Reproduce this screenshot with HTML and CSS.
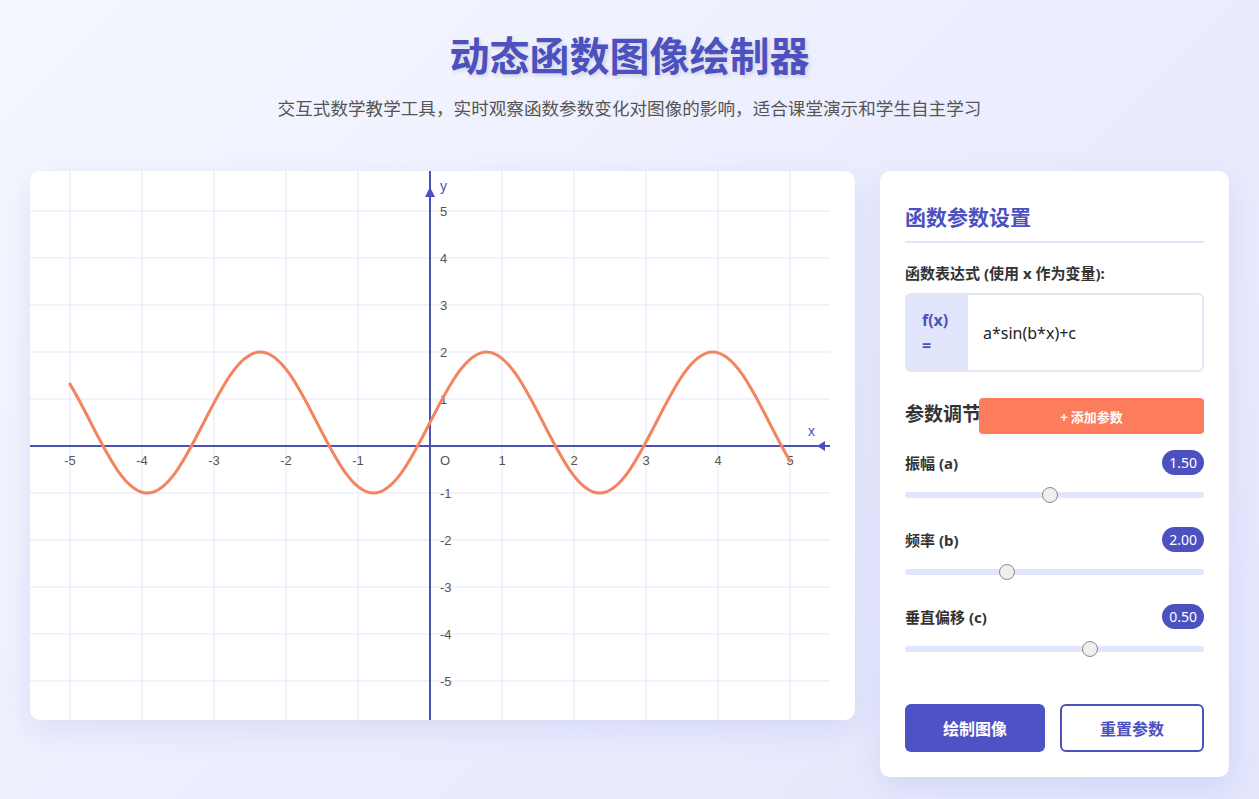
FILE: index.html
```html
<!DOCTYPE html>
<html lang="zh-CN">
<head>
<meta charset="UTF-8">
<title>动态函数图像绘制器</title>
<link rel="stylesheet" href="styles.css">
</head>
<body>
<div class="app">
  <header class="header">
    <h1 class="title">动态函数图像绘制器</h1>
    <p class="subtitle">交互式数学教学工具，实时观察函数参数变化对图像的影响，适合课堂演示和学生自主学习</p>
  </header>
  <main class="layout">
    <section class="graph-card">
      <svg class="graph" viewBox="0 0 800 550" width="800" height="550" xmlns="http://www.w3.org/2000/svg">
        <g class="grid">
          <line x1="40" y1="0" x2="40" y2="550"/>
          <line x1="112" y1="0" x2="112" y2="550"/>
          <line x1="184" y1="0" x2="184" y2="550"/>
          <line x1="256" y1="0" x2="256" y2="550"/>
          <line x1="328" y1="0" x2="328" y2="550"/>
          <line x1="472" y1="0" x2="472" y2="550"/>
          <line x1="544" y1="0" x2="544" y2="550"/>
          <line x1="616" y1="0" x2="616" y2="550"/>
          <line x1="688" y1="0" x2="688" y2="550"/>
          <line x1="760" y1="0" x2="760" y2="550"/>
          <line x1="0" y1="40" x2="800" y2="40"/>
          <line x1="0" y1="87" x2="800" y2="87"/>
          <line x1="0" y1="134" x2="800" y2="134"/>
          <line x1="0" y1="181" x2="800" y2="181"/>
          <line x1="0" y1="228" x2="800" y2="228"/>
          <line x1="0" y1="322" x2="800" y2="322"/>
          <line x1="0" y1="369" x2="800" y2="369"/>
          <line x1="0" y1="416" x2="800" y2="416"/>
          <line x1="0" y1="463" x2="800" y2="463"/>
          <line x1="0" y1="510" x2="800" y2="510"/>
        </g>
        <g class="axes">
          <line x1="0" y1="275" x2="800" y2="275"/>
          <line x1="400" y1="0" x2="400" y2="550"/>
          <polygon class="arrow" points="787,275 795,270 795,280"/>
          <polygon class="arrow" points="400,16 395,26 405,26"/>
        </g>
        <g class="ticks-x" transform="translate(0,1)">
          <text x="40" y="290">-5</text>
          <text x="112" y="290">-4</text>
          <text x="184" y="290">-3</text>
          <text x="256" y="290">-2</text>
          <text x="328" y="290">-1</text>
          <text x="415" y="290">O</text>
          <text x="472" y="290">1</text>
          <text x="544" y="290">2</text>
          <text x="616" y="290">3</text>
          <text x="688" y="290">4</text>
          <text x="760" y="290">5</text>
        </g>
        <g class="ticks-y" transform="translate(0,1.5)">
          <text x="410" y="40">5</text>
          <text x="410" y="87">4</text>
          <text x="410" y="134">3</text>
          <text x="410" y="181">2</text>
          <text x="410" y="228">1</text>
          <text x="410" y="322">-1</text>
          <text x="410" y="369">-2</text>
          <text x="410" y="416">-3</text>
          <text x="410" y="463">-4</text>
          <text x="410" y="510">-5</text>
        </g>
        <text class="axis-name" x="410" y="16">y</text>
        <text class="axis-name" x="778" y="261">x</text>
        <path class="curve" d="M40 213.15 C46.90 224.49, 53.81 237.99, 60.71 251.5
          C79.15 287.62, 96.79 322, 117.26 322
          C137.73 322, 155.36 287.62, 173.80 251.5
          C192.24 215.38, 209.88 181, 230.35 181
          C250.82 181, 268.46 215.38, 286.90 251.5
          C305.34 287.62, 322.98 322, 343.45 322
          C363.92 322, 381.56 287.62, 400 251.5
          C418.44 215.38, 436.08 181, 456.55 181
          C477.02 181, 494.66 215.38, 513.10 251.5
          C531.54 287.62, 549.18 322, 569.65 322
          C590.12 322, 607.76 287.62, 626.20 251.5
          C644.64 215.38, 662.28 181, 682.75 181
          C703.22 181, 720.85 215.38, 739.29 251.5
          C746.19 265.01, 753.10 278.51, 760 289.85"/>
      </svg>
    </section>

    <aside class="panel">
      <h2 class="panel-title">函数参数设置</h2>
      <label class="field-label" for="expr">函数表达式 (使用 x 作为变量):</label>
      <div class="expr-group">
        <span class="expr-prefix">f(x) =</span>
        <input class="expr-input" id="expr" type="text" value="a*sin(b*x)+c">
      </div>

      <div class="params-head">
        <h3 class="params-title">参数调节</h3>
        <button class="add-btn" type="button">+ 添加参数</button>
      </div>

      <div class="param">
        <div class="param-row">
          <span class="param-name">振幅 (a)</span>
          <span class="badge">1.50</span>
        </div>
        <input class="slider" type="range" min="0.1" max="3" step="0.01" value="1.5">
      </div>
      <div class="param">
        <div class="param-row">
          <span class="param-name">频率 (b)</span>
          <span class="badge">2.00</span>
        </div>
        <input class="slider" type="range" min="0.5" max="5" step="0.01" value="2">
      </div>
      <div class="param">
        <div class="param-row">
          <span class="param-name">垂直偏移 (c)</span>
          <span class="badge">0.50</span>
        </div>
        <input class="slider" type="range" min="-2" max="2" step="0.01" value="0.5">
      </div>

      <div class="actions">
        <button class="btn btn-primary" type="button">绘制图像</button>
        <button class="btn btn-outline" type="button">重置参数</button>
      </div>
    </aside>
  </main>
</div>
</body>
</html>
```

FILE: styles.css
```css
* {
  box-sizing: border-box;
}

html, body {
  margin: 0;
  padding: 0;
}

body {
  min-height: 100vh;
  font-family: "Noto Sans", "Noto Sans CJK SC", sans-serif;
  color: #333;
  background: linear-gradient(135deg, #f5f7ff 0%, #eceefe 50%, #e3e6fc 100%);
}

.app {
  padding: 30px;
}

.header {
  text-align: center;
  margin-bottom: 49px;
}

.title {
  margin: 0;
  font-family: "Noto Sans CJK SC", sans-serif;
  font-size: 40px;
  line-height: 48px;
  font-weight: 700;
  color: #4c51bf;
  text-shadow: 2px 2px 4px rgba(0, 0, 0, 0.12);
}

.subtitle {
  margin: 16px 0 0;
  font-family: "Noto Sans CJK SC", sans-serif;
  font-size: 17.6px;
  line-height: 28px;
  color: #555;
}

.layout {
  display: grid;
  grid-template-columns: 1fr 349px;
  gap: 25px;
  align-items: start;
}

.graph-card {
  background: #fff;
  border-radius: 10px;
  overflow: hidden;
  box-shadow: 0 10px 30px rgba(76, 81, 191, 0.12);
  height: 549px;
}

.graph {
  display: block;
}

.grid line {
  stroke: #eceefb;
  stroke-width: 1.5;
}

.axes line {
  stroke: #4c51b0;
  stroke-width: 2;
}

.arrow {
  fill: #4c51bf;
}

.ticks-x text,
.ticks-y text {
  font-family: "Liberation Sans", Arial, sans-serif;
  font-size: 13px;
  fill: #555;
  dominant-baseline: middle;
}

.ticks-x text {
  text-anchor: middle;
}

.ticks-y text {
  text-anchor: start;
}

.axis-name {
  font-family: "Liberation Sans", Arial, sans-serif;
  font-size: 14px;
  fill: #4c51bf;
  dominant-baseline: middle;
}

.curve {
  fill: none;
  stroke: #f4845f;
  stroke-width: 3;
  stroke-linecap: round;
  stroke-linejoin: round;
}

.panel {
  background: #fff;
  border-radius: 10px;
  padding: 30px 25px 25px;
  box-shadow: 0 10px 30px rgba(76, 81, 191, 0.12);
}

.panel-title {
  margin: 0 0 19px;
  padding-bottom: 10px;
  border-bottom: 2px solid #e2e6f8;
  font-family: "Noto Sans CJK SC", sans-serif;
  font-size: 21px;
  line-height: 30px;
  font-weight: 700;
  color: #4c51bf;
}

.field-label {
  display: block;
  margin-bottom: 9px;
  font-size: 15px;
  line-height: 22px;
  font-weight: 700;
  color: #333;
}

.expr-group {
  display: flex;
  border: 2px solid #e2e6f5;
  border-radius: 6px;
  overflow: hidden;
}

.expr-prefix {
  flex: 0 0 61px;
  width: 61px;
  padding: 12.5px 15px;
  background: #e1e5fc;
  color: #4c51bf;
  font-size: 16px;
  line-height: 25px;
  font-weight: 700;
}

.expr-input {
  flex: 1;
  min-width: 0;
  border: none;
  outline: none;
  padding: 0 15px;
  font-family: "Noto Sans", "Noto Sans CJK SC", sans-serif;
  font-size: 16px;
  color: #222;
  background: #fff;
}

.params-head {
  display: flex;
  align-items: flex-start;
  margin-top: 26px;
  margin-bottom: 16px;
}

.params-title {
  flex: 0 0 auto;
  margin: 0;
  font-family: "Noto Sans CJK SC", sans-serif;
  font-size: 19px;
  line-height: 30px;
  font-weight: 700;
  color: #333;
}

.add-btn {
  flex: 1;
  height: 36px;
  margin-left: -2px;
  border: none;
  border-radius: 4px;
  background: #fc7c5c;
  color: #fff;
  font-family: "Noto Sans CJK SC", sans-serif;
  font-size: 13px;
  font-weight: 700;
  cursor: pointer;
}

.param {
  margin-bottom: 29px;
}

.param-row {
  display: flex;
  justify-content: space-between;
  align-items: center;
  height: 25px;
  margin-bottom: 17px;
}

.param-name {
  font-size: 15px;
  font-weight: 700;
  color: #333;
}

.badge {
  height: 25px;
  padding: 0 7px;
  border-radius: 13px;
  background: #4c51bf;
  color: #fff;
  font-size: 14px;
  line-height: 25px;
}

.slider {
  -webkit-appearance: none;
  appearance: none;
  display: block;
  width: 100%;
  height: 6px;
  margin: 0;
  border-radius: 3px;
  background: #e2e6fc;
  outline: none;
}

.slider::-webkit-slider-thumb {
  -webkit-appearance: none;
  appearance: none;
  box-sizing: border-box;
  width: 16px;
  height: 16px;
  border-radius: 50%;
  background: #efefef;
  border: 1px solid #8a8a8a;
}

.actions {
  display: flex;
  gap: 15px;
  margin-top: 52px;
}

.btn {
  flex: 1;
  height: 48px;
  border-radius: 6px;
  font-family: "Noto Sans CJK SC", sans-serif;
  font-size: 16px;
  font-weight: 700;
  cursor: pointer;
}

.btn-primary {
  border: none;
  background: #4f52c4;
  color: #fff;
}

.btn-outline {
  border: 2px solid #4c51bf;
  background: #fff;
  color: #4c51bf;
}
```
